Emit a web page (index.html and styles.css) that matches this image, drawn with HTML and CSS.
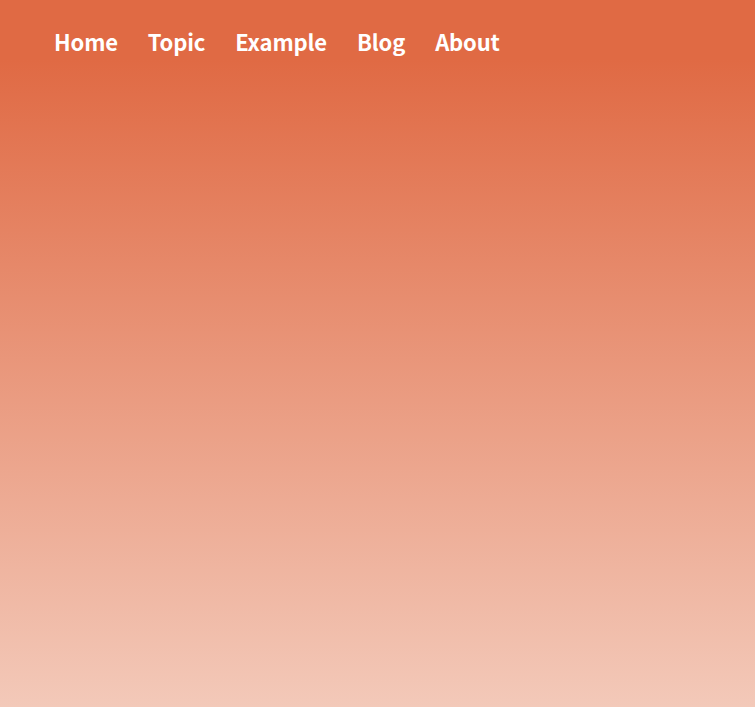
FILE: index.html
```html
<!DOCTYPE html>
<html>
<head>
<meta charset="utf-8">
<link rel="stylesheet" href="styles.css">
</head>
<body>
<nav class="nav">
  <a class="nav-link" href="#">Home</a>
  <a class="nav-link" href="#">Topic</a>
  <a class="nav-link" href="#">Example</a>
  <a class="nav-link" href="#">Blog</a>
  <a class="nav-link" href="#">About</a>
</nav>
</body>
</html>
```

FILE: styles.css
```css
html, body {
  margin: 0;
  height: 100%;
}
body {
  background: linear-gradient(to bottom, #e06a44 0px, #e06a44 60px, #f3c9b9 707px);
  font-family: "Noto Sans CJK KR", "Noto Sans", sans-serif;
}
.nav {
  display: flex;
  gap: 30px;
  padding: 24px 0 0 54px;
}
.nav-link {
  color: #fff;
  text-decoration: none;
  font-weight: 700;
  font-size: 22px;
  line-height: 34px;
  letter-spacing: -0.15px;
}
```
